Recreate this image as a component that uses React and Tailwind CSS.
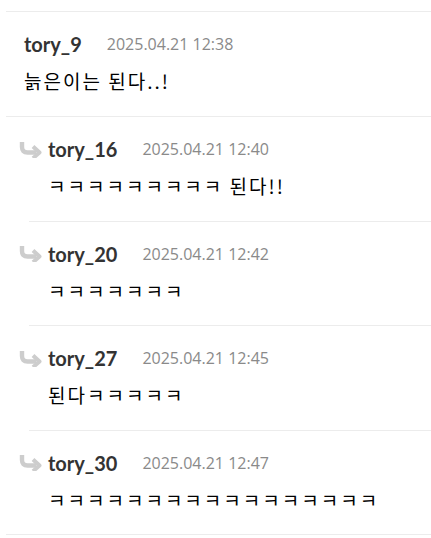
import React from "react";

const Arrow = () => (
  <svg width="23" height="17" viewBox="0 0 23 17" className="shrink-0">
    <path d="M3 1 V6 Q3 11.5 8.5 11.5 H17" fill="none" stroke="#cdcdcd" strokeWidth="4.4" strokeLinecap="butt" />
    <path d="M14 5.5 L20.5 11.5 L14 17.2" fill="none" stroke="#cdcdcd" strokeWidth="4" strokeLinecap="butt" strokeLinejoin="round" />
  </svg>
);

const nameCls = "text-[20px] font-bold text-[#333] leading-[22px]";
const nameFont = { fontFamily: "Lato, 'Noto Sans', sans-serif" };
const dateCls = "text-[16px] text-[#8a8a8a] leading-[22px]";
const dateFont = { fontFamily: "'Open Sans', sans-serif" };
const bodyCls = "mt-[14px] text-[19px] leading-[24px] tracking-[2px] text-black";

const replies = [
  { n: "tory_16", d: "2025.04.21 12:40", c: "ㅋㅋㅋㅋㅋㅋㅋㅋㅋ 된다!!" },
  { n: "tory_20", d: "2025.04.21 12:42", c: "ㅋㅋㅋㅋㅋㅋㅋ" },
  { n: "tory_27", d: "2025.04.21 12:45", c: "된다ㅋㅋㅋㅋㅋ" },
  { n: "tory_30", d: "2025.04.21 12:47", c: "ㅋㅋㅋㅋㅋㅋㅋㅋㅋㅋㅋㅋㅋㅋㅋㅋㅋ" },
];

export default function App() {
  return (
    <div className="bg-white w-[431px] h-[538px] pt-[11px] pl-[6px]" style={{ fontFamily: "'Noto Sans CJK KR', sans-serif" }}>
      <div className="border-t border-b border-[#ececec]">
        <div className="pl-[18px] pt-[21px] pb-[23px] border-b border-[#ececec]">
          <div className="flex items-center">
            <span className={nameCls} style={nameFont}>tory_9</span>
            <span className={"ml-[25px] " + dateCls} style={dateFont}>2025.04.21 12:38</span>
          </div>
          <div className={bodyCls}>늙은이는 된다..!</div>
        </div>
        {replies.map((r, i) => (
          <div key={r.n} className={"ml-[23px] " + (i < replies.length - 1 ? "border-b border-[#ececec]" : "")}>
            <div className="-ml-[10px] pt-[21px] pb-[22.5px]">
              <div className="flex items-center">
                <Arrow />
                <span className={"ml-[6px] " + nameCls} style={nameFont}>{r.n}</span>
                <span className={"ml-[25px] " + dateCls} style={dateFont}>{r.d}</span>
              </div>
              <div className={bodyCls + " ml-[29px]"}>{r.c}</div>
            </div>
          </div>
        ))}
      </div>
    </div>
  );
}
